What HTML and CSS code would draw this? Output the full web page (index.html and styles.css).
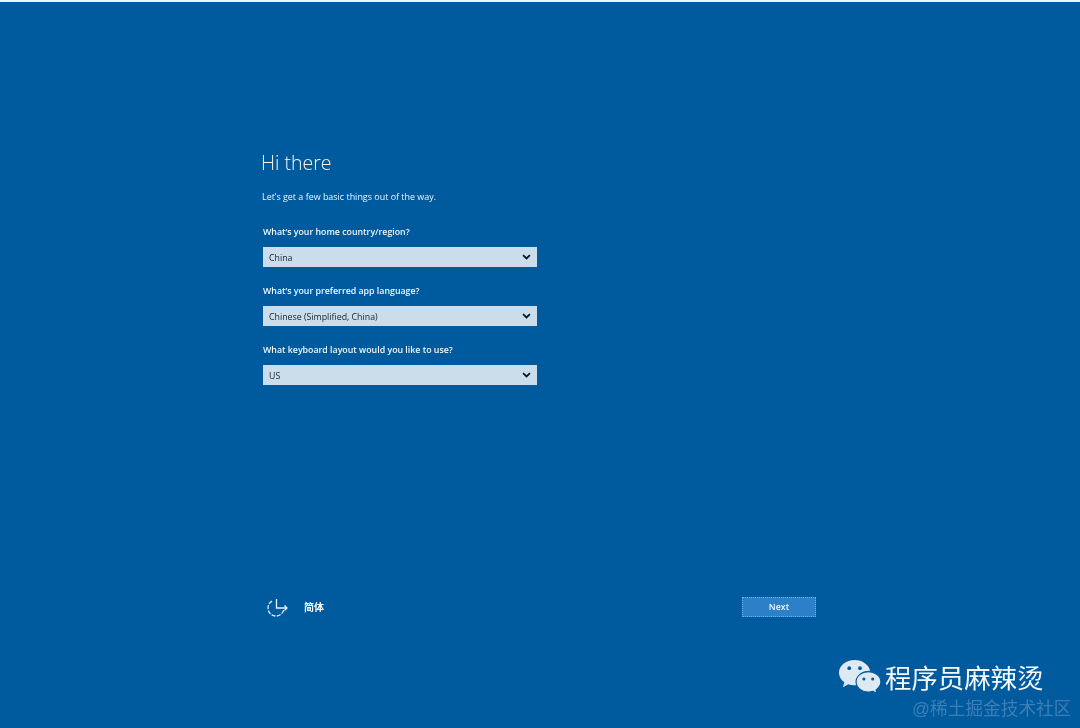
FILE: index.html
```html
<!DOCTYPE html>
<html lang="en">
<head>
<meta charset="utf-8">
<title>Hi there</title>
<link rel="stylesheet" href="styles.css">
</head>
<body>
<main class="screen">
  <section class="form">
    <h1 class="title">Hi there</h1>
    <p class="intro">Let’s get a few basic things out of the way.</p>
    <div class="field">
      <label class="label">What’s your home country/region?</label>
      <div class="select"><span class="value">China</span><svg class="chev" viewBox="0 0 10 7"><path d="M1 1.200 5 5.200 9 1.200"/></svg></div>
    </div>
    <div class="field">
      <label class="label">What’s your preferred app language?</label>
      <div class="select"><span class="value">Chinese (Simplified, China)</span><svg class="chev" viewBox="0 0 10 7"><path d="M1 1.200 5 5.200 9 1.200"/></svg></div>
    </div>
    <div class="field">
      <label class="label">What keyboard layout would you like to use?</label>
      <div class="select"><span class="value">US</span><svg class="chev" viewBox="0 0 10 7"><path d="M1 1.200 5 5.200 9 1.200"/></svg></div>
    </div>
  </section>
  <footer class="actions">
    <div class="lang">
      <svg class="ease" viewBox="0 0 22 20"><path class="dash" d="M5 4.100A8 8 0 1 0 16.800 12.700"/><path d="M9.500 2v9h10.500M17.500 8.500 20 11l-2.500 2.500"/></svg>
      <span class="lang-text">简体</span>
    </div>
    <button class="next">Next</button>
  </footer>
</main>
<aside class="mark">
  <div class="brand">
    <svg class="wechat" viewBox="0 0 44 36">
      <path class="b1" d="M17 1C8 1 1 7 1 14c0 4 2 7.600 5.500 10L5 29l5.500-3c2 .6 4 1 6.500 1 .8 0 1.500 0 2.300-.1C18.500 17 25 12 33 12.200 31.500 5.800 25 1 17 1Z"/>
      <circle class="e1" cx="11.500" cy="9.500" r="1.900"/><circle class="e1" cx="22.500" cy="9.500" r="1.900"/>
      <path class="b2" d="M31 13c-7 0-12.500 4.700-12.500 10.500S24 34 31 34c1.700 0 3.300-.3 4.800-.8L40 35.500l-1.100-3.800c3-2 5-4.800 5-8.200C43.900 17.700 38 13 31 13Z"/>
      <circle class="e2" cx="26.500" cy="20.500" r="1.600"/><circle class="e2" cx="35.500" cy="20.500" r="1.600"/>
    </svg>
    <span class="brand-text">程序员麻辣烫</span>
  </div>
  <div class="credit">@稀土掘金技术社区</div>
</aside>
</body>
</html>
```
FILE: styles.css
```css
html, body { margin: 0; height: 100%; }
body {
  background: #005a9e;
  border-top: 2px solid #e8f6fb;
  box-sizing: border-box;
  overflow: hidden;
  font-family: "Open Sans", "Noto Sans", "Noto Sans CJK SC", sans-serif;
  color: #fff;
}
.screen {
  height: 100%;
  box-sizing: border-box;
  padding: 150px 0 0 261px;
  display: flex;
  flex-direction: column;
  filter: blur(0.3px);
}
.form { width: 276px; height: 445px; display: flex; flex-direction: column; }
.title { margin: 0; font-size: 19.500px; line-height: 22px; font-weight: 300; color: #f0f7fc; }
.intro { margin: 16px 0 0 1px; font-size: 8.950px; line-height: 14px; color: #eef6fc; }
.field { margin: 17px 0 0 2px; display: flex; flex-direction: column; }
.field:first-of-type { margin-top: 21px; }
.label { font-size: 8.800px; line-height: 14px; font-weight: 600; color: #f0f7fc; }
.select {
  margin-top: 8px;
  width: 274px;
  height: 20px;
  box-sizing: border-box;
  padding: 0 6px;
  background: #cbdceb;
  display: flex;
  align-items: center;
  justify-content: space-between;
  font-size: 8.800px;
  color: #16232f;
}
.value { padding-top: 1px; }
.chev { width: 9px; height: 6px; fill: none; stroke: #0a1420; stroke-width: 2; }
.actions { width: 549px; display: flex; justify-content: space-between; align-items: center; margin-left: 6px; }
.lang { display: flex; align-items: center; gap: 15px; }
.ease { width: 22px; height: 20px; fill: none; stroke: #e8f3fb; stroke-width: 1.300; }
.ease .dash { stroke-dasharray: 4 1.400; }
.lang-text { font-family: "Noto Sans CJK SC", sans-serif; font-size: 10px; font-weight: 700; margin-bottom: 2px; }
.next {
  width: 74px;
  height: 20px;
  padding: 0;
  background: #2b80c8;
  border: 1px dotted #6fb0dc;
  outline: none;
  color: #eef7fd;
  font: 600 8.800px "Open Sans", sans-serif;
}
.mark { position: absolute; top: 658px; left: 838px; width: 236px; filter: blur(0.3px); }
.brand { display: flex; align-items: center; gap: 4px; }
.wechat { width: 43px; height: 37px; }
.b1 { fill: #dfe9f3; }
.e1 { fill: #005a9e; }
.b2 { fill: #dfe9f3; stroke: #005a9e; stroke-width: 1.200; }
.e2 { fill: #005a9e; }
.brand-text { font-family: "Noto Sans CJK SC", sans-serif; font-size: 26.400px; line-height: 37px; color: #f5f9fc; }
.credit {
  margin: 2px 0 0 74px;
  font-family: "Liberation Sans", "Noto Sans CJK SC", sans-serif;
  font-size: 17.700px;
  line-height: 24px;
  white-space: nowrap;
  color: #3c7fb6;
}
```
